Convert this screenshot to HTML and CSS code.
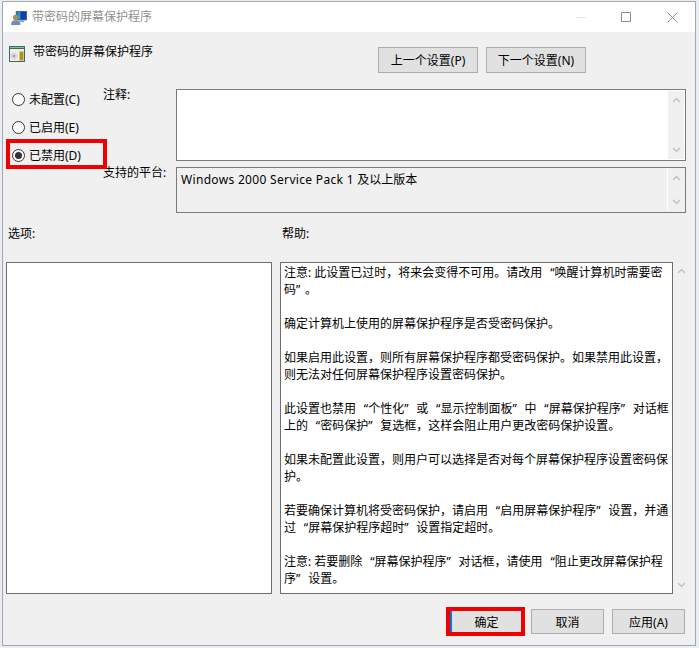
FILE: index.html
```html
<!DOCTYPE html>
<html lang="zh-CN">
<head>
<meta charset="utf-8">
<title>带密码的屏幕保护程序</title>
<link rel="stylesheet" href="styles.css">
</head>
<body>
<div class="window">
  <div class="titlebar">
    <svg class="title-icon" width="17" height="16" viewBox="0 0 18 17">
      <rect x="5" y="1" width="12" height="10" fill="#5a6a80"/>
      <rect x="7" y="2" width="9" height="8" fill="#0a3fb0"/>
      <rect x="7" y="2" width="3" height="8" fill="#16a0d8"/>
      <rect x="9" y="11" width="5" height="2" fill="#9aa4ae"/>
      <circle cx="5" cy="8" r="3" fill="#b08a60"/>
      <path d="M0 16c0-4 2-5 5-5s5 1 5 5z" fill="#6f8fb8"/>
    </svg>
    <span class="title-text">带密码的屏幕保护程序</span>
    <div class="caption">
      <svg width="10" height="10" viewBox="0 0 10 10"><path d="M0 5.5h10" stroke="#e4e4e4"/></svg>
      <svg width="10" height="10" viewBox="0 0 10 10"><path d="M.5.5h9v9h-9z" fill="none" stroke="#8c8c8c"/></svg>
      <svg class="close-icon" width="11" height="11" viewBox="0 0 11 11"><path d="M.5.5l10 10M10.500.5l-10 10" stroke="#8c8c8c" fill="none"/></svg>
    </div>
  </div>
  <div class="content">
    <div class="header">
      <div class="heading">
        <svg width="17" height="17" viewBox="0 0 17 17">
          <rect x="0" y="0" width="16" height="16" fill="#2f6f6a"/>
          <rect x="1" y="3" width="14" height="12" fill="#f4efd8"/>
          <rect x="1" y="1" width="14" height="1" fill="#8fb8b0"/>
          <circle cx="5" cy="10" r="3.500" fill="#d8d4e4"/>
          <circle cx="5" cy="10" r="1" fill="#8a7fa0"/>
          <rect x="10" y="5" width="5" height="10" fill="#e8c860"/>
          <path d="M11 7h3M11 9h3M11 11h3M11 13h3" stroke="#5a5030"/>
        </svg>
        <span class="heading-text">带密码的屏幕保护程序</span>
      </div>
      <div class="nav">
        <button class="btn btn-nav">上一个设置(P)</button>
        <button class="btn btn-nav">下一个设置(N)</button>
      </div>
    </div>

    <div class="top">
      <div class="radios">
        <label class="radio"><input type="radio" name="state"><span>未配置(C)</span></label>
        <label class="radio"><input type="radio" name="state"><span>已启用(E)</span></label>
        <label class="radio radio-marked"><input type="radio" name="state" checked><span>已禁用(D)</span></label>
      </div>
      <div class="fields">
        <div class="field-label">注释:</div>
        <div class="box box-notes">
          <div class="box-body"></div>
          <div class="scroll">
            <svg width="9" height="6" viewBox="0 0 9 6"><path d="M1 5l3.500-3.500L8 5" class="chev"/></svg>
            <svg width="9" height="6" viewBox="0 0 9 6"><path d="M1 1l3.500 3.500L8 1" class="chev"/></svg>
          </div>
        </div>
        <div class="field-label">支持的平台:</div>
        <div class="box box-platform">
          <div class="box-body"><span class="latin">Windows 2000 Service Pack 1 </span>及以上版本</div>
          <div class="scroll">
            <svg width="9" height="6" viewBox="0 0 9 6"><path d="M1 5l3.500-3.500L8 5" class="chev"/></svg>
            <svg width="9" height="6" viewBox="0 0 9 6"><path d="M1 1l3.500 3.500L8 1" class="chev"/></svg>
          </div>
        </div>
      </div>
    </div>

    <div class="section-labels">
      <div class="label-options">选项:</div>
      <div class="label-help">帮助:</div>
    </div>

    <div class="panels">
      <div class="panel-options"></div>
      <div class="panel-help">
        <p>注意: 此设置已过时，将来会变得不可用。请改用 <span class="qo">“</span>唤醒计算机时需要密<br>码<span class="qc">”</span>。</p>
        <p>确定计算机上使用的屏幕保护程序是否受密码保护。</p>
        <p>如果启用此设置，则所有屏幕保护程序都受密码保护。如果禁用此设置，<br>则无法对任何屏幕保护程序设置密码保护。</p>
        <p>此设置也禁用 <span class="qo">“</span>个性化<span class="qc">”</span> 或 <span class="qo">“</span>显示控制面板<span class="qc">”</span> 中 <span class="qo">“</span>屏幕保护程序<span class="qc">”</span> 对话框<br>上的 <span class="qo">“</span>密码保护<span class="qc">”</span> 复选框，这样会阻止用户更改密码保护设置。</p>
        <p>如果未配置此设置，则用户可以选择是否对每个屏幕保护程序设置密码保<br>护。</p>
        <p>若要确保计算机将受密码保护，请启用 <span class="qo">“</span>启用屏幕保护程序<span class="qc">”</span> 设置，并通<br>过 <span class="qo">“</span>屏幕保护程序超时<span class="qc">”</span> 设置指定超时。</p>
        <p>注意: 若要删除 <span class="qo">“</span>屏幕保护程序<span class="qc">”</span> 对话框，请使用 <span class="qo">“</span>阻止更改屏幕保护程<br>序<span class="qc">”</span> 设置。</p>
      </div>
      <div class="help-scroll">
        <svg width="9" height="6" viewBox="0 0 9 6"><path d="M1 5l3.500-3.500L8 5" class="chev"/></svg>
        <svg width="9" height="6" viewBox="0 0 9 6"><path d="M1 1l3.500 3.500L8 1" class="chev"/></svg>
      </div>
    </div>

    <div class="footer">
      <div class="ok-frame"><button class="btn btn-ok">确定</button></div>
      <button class="btn btn-foot btn-cancel">取消</button>
      <button class="btn btn-foot">应用(A)</button>
    </div>
  </div>
</div>
</body>
</html>
```

FILE: styles.css
```css
*, *::before, *::after { box-sizing: border-box; }

html, body {
  margin: 0;
  height: 100%;
}

body {
  background: #e9eef4;
  font-family: "Noto Sans", "Noto Sans CJK SC", sans-serif;
  font-size: 12px;
  color: #000;
  overflow: hidden;
}

.window {
  width: 694px;
  height: 645px;
  margin: 1px 0 0 2px;
  border: 1px solid #a3a6aa;
  background: #f0f0f0;
  display: flex;
  flex-direction: column;
}

.titlebar {
  height: 30px;
  background: #fff;
  display: flex;
  align-items: center;
  flex: none;
}

.title-icon {
  margin-left: 8px;
  margin-top: 1px;
}

.title-text {
  margin-left: 4px;
  color: #8f8f8f;
  line-height: 30px;
}

.caption {
  margin-left: auto;
  margin-right: 17px;
  display: flex;
  align-items: center;
  gap: 35px;
}

.close-icon {
  margin-left: 1px;
}

.content {
  flex: 1;
  display: flex;
  flex-direction: column;
  min-height: 0;
}

.header {
  margin-top: 15px;
  height: 26px;
  display: flex;
  flex: none;
}

.heading {
  display: flex;
  align-items: flex-start;
  margin-left: 6px;
  margin-top: -1px;
  gap: 7px;
}

.heading-text {
  line-height: 12px;
}

.nav {
  margin-left: 225px;
  display: flex;
  gap: 8px;
}

.btn {
  font: inherit;
  color: #000;
  background: #e1e1e1;
  border: 1px solid #adadad;
  padding: 0;
  margin: 0;
}

.btn-nav {
  width: 100px;
  height: 26px;
}

.top {
  margin-top: 16px;
  display: flex;
  flex: none;
}

.radios {
  width: 100px;
  margin-top: -1px;
  margin-left: 7px;
  display: flex;
  flex-direction: column;
  gap: 6px;
  flex: none;
  align-self: flex-start;
}

.radio {
  position: relative;
  height: 22px;
  padding-left: 2px;
  display: flex;
  align-items: center;
  gap: 4px;
}

.radio input {
  appearance: none;
  width: 13px;
  height: 13px;
  margin: 0;
  border: 1px solid #333;
  border-radius: 50%;
  background: #fff;
  position: relative;
  flex: none;
}

.radio input:checked::after {
  content: "";
  position: absolute;
  inset: 2px;
  border-radius: 50%;
  background: #333;
}

.radio-marked::after {
  content: "";
  position: absolute;
  left: -4px;
  top: -5px;
  width: 101px;
  height: 30px;
  border: 4px solid #f00000;
  pointer-events: none;
}

.fields {
  margin-left: -7px;
  display: grid;
  grid-template-columns: 73px 510px;
  row-gap: 6px;
}

.field-label {
  line-height: 12px;
}

.box {
  border: 1px solid #7a7a7a;
  display: flex;
}

.box-notes {
  height: 72px;
  background: #fff;
}

.box-platform {
  height: 46px;
  background: #f0f0f0;
}

.box-body {
  flex: 1;
  padding: 3px 4px;
  line-height: 17px;
}

.latin {
  letter-spacing: 0.32px;
}

.scroll {
  width: 17px;
  margin: 1px 1px 1px 0;
  background: #f0f0f0;
  border-left: 1px solid #fff;
  display: flex;
  flex-direction: column;
  align-items: center;
  justify-content: space-between;
  padding: 6px 0;
  flex: none;
}

.chev {
  fill: none;
  stroke: #c2c2c2;
  stroke-width: 1.5;
}

.section-labels {
  margin-top: 13px;
  height: 16px;
  line-height: 16px;
  display: flex;
  flex: none;
}

.label-options {
  margin-left: 5px;
  width: 274px;
}

.panels {
  margin-top: 20px;
  height: 332px;
  margin-left: 3px;
  display: flex;
  flex: none;
}

.panel-options {
  width: 266px;
  background: #fff;
  border: 1px solid #6e6e6e;
}

.panel-help {
  width: 393px;
  margin-left: 8px;
  background: #fff;
  border: 1px solid #6e6e6e;
  padding: 1px 3px;
  line-height: 17px;
  white-space: nowrap;
  overflow: hidden;
}

.panel-help p {
  margin: 0 0 17px;
}

.qo {
  margin-left: 4.7px;
}

.qc {
  margin-right: 4.7px;
}

.help-scroll {
  width: 17px;
  display: flex;
  flex-direction: column;
  align-items: center;
  justify-content: space-between;
  padding: 6px 0;
  flex: none;
}

.footer {
  margin-top: 13px;
  padding-right: 10px;
  display: flex;
  justify-content: flex-end;
  align-items: center;
  flex: none;
}

.ok-frame {
  width: 79px;
  height: 29px;
  border: 4px solid #f00000;
  margin-right: 6px;
  display: flex;
}

.btn-ok {
  width: 100%;
  height: 100%;
  border: 0;
  border-left: 2px solid #0078d7;
}

.btn-foot {
  width: 73px;
  height: 25px;
}

.btn-cancel {
  margin-right: 8px;
}
```
